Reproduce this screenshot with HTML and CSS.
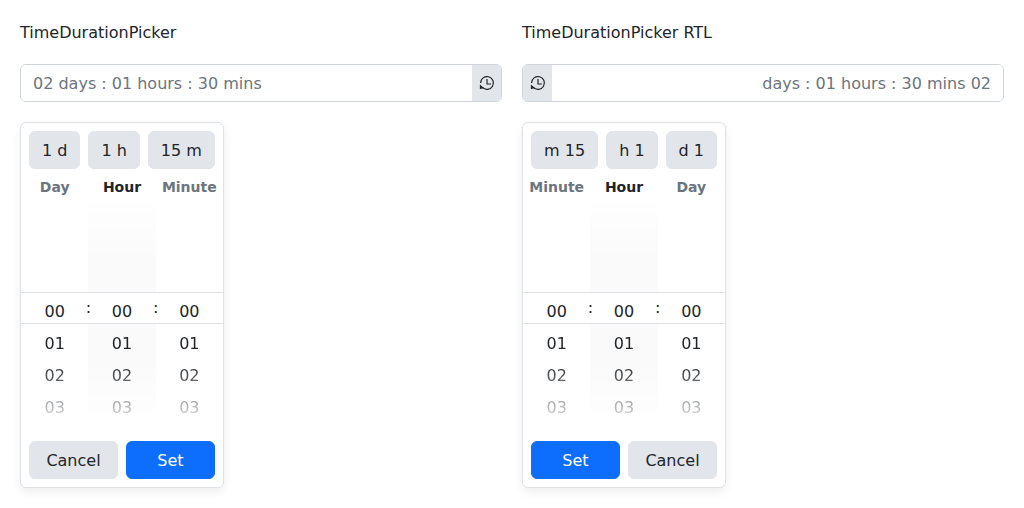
FILE: index.html
```html
<!DOCTYPE html>
<html>
<head>
<meta charset="utf-8" />
<title>TimeDurationPicker</title>
<link rel="stylesheet" href="styles.css">
</head>
<body>
<div class="demo">
	<div class="picker">
		<h1 class="title">TimeDurationPicker</h1>
		<div class="field">
			<input class="field-input" type="text" readonly value="02 days : 01 hours : 30 mins">
			<span class="field-icon">
				<svg width="16" height="16" viewBox="0 0 16 16"><path class="clock" d="M3.4 12.4A6.4 6.4 0 1 0 1.6 8"/><path class="hands" d="M8 4V9H12"/><path class="arrow" d="M.9 9.6L5.2 13.2L.9 14Z"/></svg>
			</span>
		</div>
		<div class="panel">
			<div class="quick">
				<button class="btn">1 d</button>
				<button class="btn">1 h</button>
				<button class="btn">15 m</button>
			</div>
			<div class="labels">
				<span class="label">Day</span>
				<span class="label active">Hour</span>
				<span class="label">Minute</span>
			</div>
			<div class="wheel">
				<div class="col"><span>01</span><span>02</span><span>03</span></div>
				<div class="col shaded"><span>01</span><span>02</span><span>03</span></div>
				<div class="col"><span>01</span><span>02</span><span>03</span></div>
				<div class="current">
					<span class="digit">00</span><span class="colon">:</span>
					<span class="digit">00</span><span class="colon">:</span>
					<span class="digit">00</span>
				</div>
			</div>
			<div class="actions">
				<button class="btn">Cancel</button>
				<button class="btn primary">Set</button>
			</div>
		</div>
	</div>

	<div class="picker">
		<h1 class="title">TimeDurationPicker RTL</h1>
		<div class="field" dir="rtl">
			<input class="field-input" type="text" readonly dir="rtl" value="02 days : 01 hours : 30 mins">
			<span class="field-icon">
				<svg width="16" height="16" viewBox="0 0 16 16"><path class="clock" d="M3.4 12.4A6.4 6.4 0 1 0 1.6 8"/><path class="hands" d="M8 4V9H12"/><path class="arrow" d="M.9 9.6L5.2 13.2L.9 14Z"/></svg>
			</span>
		</div>
		<div class="panel" dir="rtl">
			<div class="quick">
				<button class="btn">1 d</button>
				<button class="btn">1 h</button>
				<button class="btn">15 m</button>
			</div>
			<div class="labels">
				<span class="label">Day</span>
				<span class="label active">Hour</span>
				<span class="label">Minute</span>
			</div>
			<div class="wheel">
				<div class="col"><span>01</span><span>02</span><span>03</span></div>
				<div class="col shaded"><span>01</span><span>02</span><span>03</span></div>
				<div class="col"><span>01</span><span>02</span><span>03</span></div>
				<div class="current">
					<span class="digit">00</span><span class="colon">:</span>
					<span class="digit">00</span><span class="colon">:</span>
					<span class="digit">00</span>
				</div>
			</div>
			<div class="actions">
				<button class="btn">Cancel</button>
				<button class="btn primary">Set</button>
			</div>
		</div>
	</div>
</div>
</body>
</html>
```

FILE: styles.css
```css
* { box-sizing: border-box; }
html, body { margin: 0; padding: 0; }
body { font-family: "DejaVu Sans", sans-serif; font-size: 16px; line-height: 24px; color: #212529; background: #fff; }

.demo { display: flex; gap: 20px; padding: 20px; }
.picker { flex: 1; min-width: 0; }
.title { margin: 0 0 19px; font-size: 16px; font-weight: 400; line-height: 25px; }

.field { display: flex; height: 38px; border: 1px solid #ced4da; border-radius: 6px; overflow: hidden; }
.field-input { flex: 1; min-width: 0; padding: 2px 12px 0; border: 0; outline: 0; background: #fff; font: inherit; color: #6c757d; }
.field-icon { display: flex; align-items: center; justify-content: center; width: 29px; background: #e2e5ea; }
.clock, .hands { fill: none; stroke: #212529; stroke-width: 1.2; }
.arrow { fill: #212529; }

.panel { width: 204px; height: 366px; margin-top: 20px; padding: 8px 0; border: 1px solid #dee2e6; border-radius: 6px; background: #fff; box-shadow: 0 4px 10px rgba(0, 0, 0, .07); }

.btn { height: 38px; padding: 2px 12px 0; border: 1px solid #e2e5ea; border-radius: 6px; background: #e2e5ea; font: inherit; color: #212529; }
.btn.primary { background: #0d6efd; border-color: #0d6efd; color: #fff; }

.quick { display: flex; gap: 8px; padding: 0 8px; }

.labels { display: flex; height: 30px; padding-top: 8px; }
.label { flex: 1; text-align: center; font-size: 14px; font-weight: 700; line-height: 20px; color: #6c757d; white-space: nowrap; }
.label.active { color: #212529; }

.wheel { position: relative; display: flex; height: 224px; }
.col { flex: 1; display: flex; flex-direction: column; padding-top: 128px; text-align: center; line-height: 33px; -webkit-mask-image: linear-gradient(to bottom, rgba(0, 0, 0, .1) 0, #000 62px, #000 162px, rgba(0, 0, 0, .1) 224px); mask-image: linear-gradient(to bottom, rgba(0, 0, 0, .1) 0, #000 62px, #000 162px, rgba(0, 0, 0, .1) 224px); }
.col span { height: 32px; }
.col.shaded { background: linear-gradient(#fafafa, #fafafa) no-repeat 0 4px / 100% 210px; }

.current { position: absolute; left: 0; right: 0; top: 93px; display: flex; height: 32px; padding-top: 2px; border-top: 1px solid #dee2e6; border-bottom: 1px solid #dee2e6; background: #fff; line-height: 33px; }
.digit { flex: 1; text-align: center; }
.colon { width: 0; display: flex; justify-content: center; margin-top: -4px; }

.actions { display: flex; gap: 8px; margin-top: 18px; padding: 0 8px; }
.actions .btn { flex: 1; }
```
